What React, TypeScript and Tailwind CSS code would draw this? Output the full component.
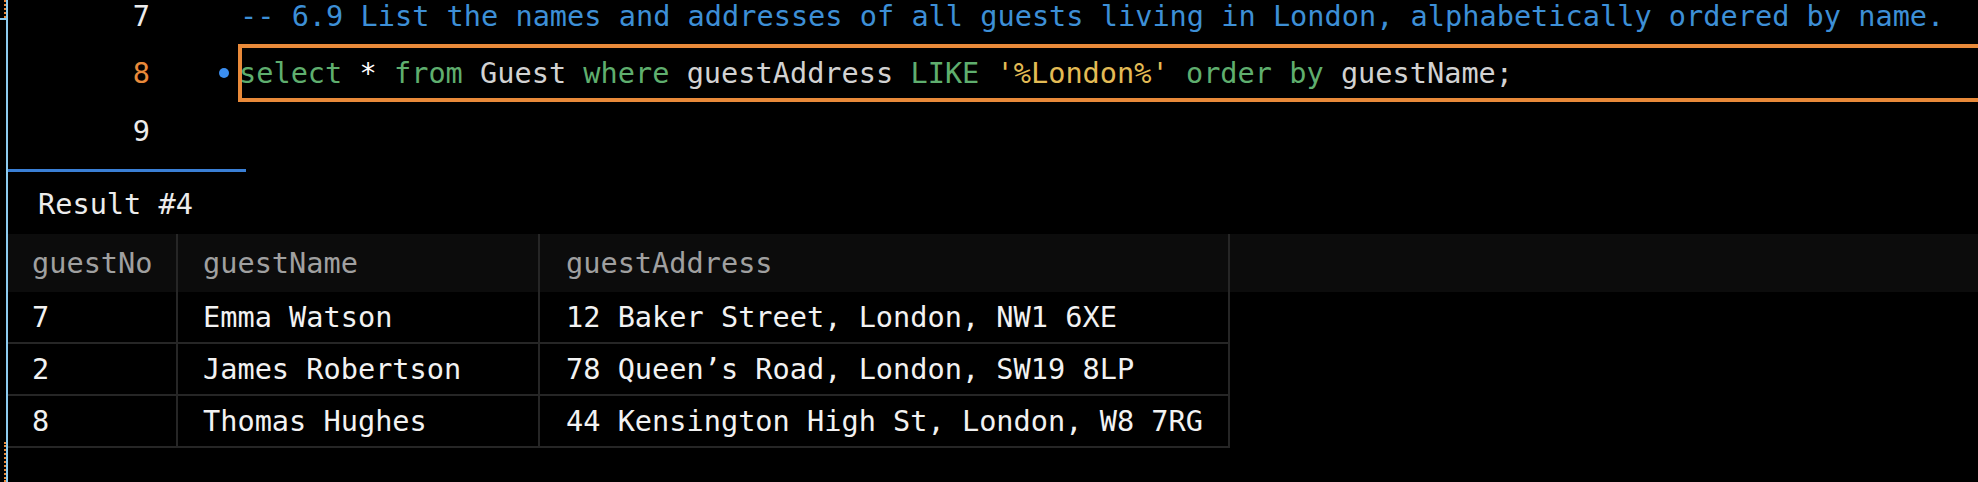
const mono = { fontFamily: '"DejaVu Sans Mono", "Liberation Mono", monospace' };

const rows = [
  { no: '7', name: 'Emma Watson', address: '12 Baker Street, London, NW1 6XE' },
  { no: '2', name: 'James Robertson', address: '78 Queen’s Road, London, SW19 8LP' },
  { no: '8', name: 'Thomas Hughes', address: '44 Kensington High St, London, W8 7RG' },
];

const Kw = ({ children }: { children: React.ReactNode }) => <span className="text-[#5fae6e]">{children}</span>;
const Id = ({ children }: { children: React.ReactNode }) => <span className="text-[#d2d2d2]">{children}</span>;

function EditorLine({ num, active, first, children }: { num: string; active?: boolean; first?: boolean; children?: React.ReactNode }) {
  return (
    <div className={first ? 'flex items-start h-[44px] leading-[32px]' : 'flex items-center h-[58px]'}>
      <span className={`w-[142px] text-right ${active ? 'text-[#e98a3a]' : 'text-[#ececec]'}`}>{num}</span>
      <div className="w-[88px] h-full flex justify-end items-center">
        {active && <span className="w-[10px] h-[10px] rounded-full bg-[#3b8ef0] mr-[9px]" />}
      </div>
      {active ? (
        <div className="flex-1 h-[58px] border-4 border-r-0 border-[#e98a3a] flex items-center">
          <span className="whitespace-pre -ml-[3px]">{children}</span>
        </div>
      ) : (
        <div className="flex-1 pl-[2px] whitespace-pre">{children}</div>
      )}
    </div>
  );
}

export default function App() {
  return (
    <div className="w-[1978px] h-[482px] bg-black flex overflow-hidden text-[28.6px]" style={mono}>
      {/* left edge markers */}
      <div className="w-[6px] flex flex-col">
        <div className="h-[18px] w-[6px] border-r-2 border-dotted border-[#e98a3a]" />
        <div className="h-[2px] w-[6px] bg-[#8ccbef]" />
        <div className="flex-1" />
        <div className="h-[40px] w-[6px] border-r-2 border-dotted border-[#e98a3a]" />
      </div>
      <div className="w-[2px] bg-[#8ccbef]" />

      <div className="flex-1 flex flex-col overflow-hidden">
        {/* editor */}
        <div>
          <EditorLine num="7" first>
            <span className="text-[#3d8fd6]">-- 6.9 List the names and addresses of all guests living in London, alphabetically ordered by name.</span>
          </EditorLine>
          <EditorLine num="8" active>
            <Kw>select</Kw> <span className="text-white">*</span> <Kw>from</Kw> <Id>Guest</Id> <Kw>where</Kw> <Id>guestAddress</Id>{' '}
            <Kw>LIKE</Kw> <span className="text-[#e3bb55]">'%London%'</span> <Kw>order by</Kw> <Id>guestName;</Id>
          </EditorLine>
          <EditorLine num="9" />
        </div>

        <div className="mt-[9px] h-[3px] w-[238px] bg-[#3a7fd5]" />

        <div className="h-[62px] flex items-center pl-[30px] pt-[3px] text-[#ececec]">Result #4</div>

        {/* result grid */}
        <div className="flex flex-col">
          <div className="flex h-[58px] bg-[#0c0c0c] text-[#a0a0a0]">
            <div className="w-[170px] border-r-2 border-[#262626] pl-[24px] flex items-center">guestNo</div>
            <div className="w-[362px] border-r-2 border-[#262626] pl-[25px] flex items-center">guestName</div>
            <div className="w-[690px] border-r-2 border-[#262626] pl-[26px] flex items-center">guestAddress</div>
          </div>
          {rows.map((r) => (
            <div key={r.no} className="flex w-[1222px] h-[52px] border-b-2 border-[#262626] text-[#f2f2f2]">
              <div className="w-[170px] border-r-2 border-[#262626] pl-[24px] flex items-center">{r.no}</div>
              <div className="w-[362px] border-r-2 border-[#262626] pl-[25px] flex items-center">{r.name}</div>
              <div className="w-[690px] border-r-2 border-[#262626] pl-[26px] flex items-center whitespace-pre">{r.address}</div>
            </div>
          ))}
        </div>
      </div>
    </div>
  );
}
